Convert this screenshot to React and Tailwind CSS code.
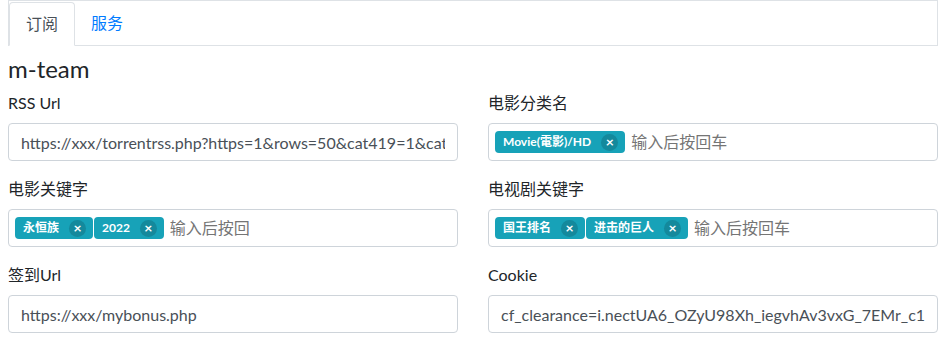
import React from 'react';

const font = "[font-family:'Lato','Noto_Sans_CJK_SC',sans-serif]";

const Tag = ({ text }) => (
  <span className="inline-flex shrink-0 items-center h-[22px] rounded-[4px] bg-[#17a2b8] pl-2 pr-[7px] text-[12px] font-bold text-white leading-none">
    <span>{text}</span>
    <span className="ml-[10px] flex h-[17px] w-[17px] items-center justify-center rounded-full bg-[#14899c] text-[14px] font-bold leading-none">×</span>
  </span>
);

const TextField = ({ label, value }) => (
  <div className="mb-4">
    <div className="mb-2 h-6 leading-6 text-[16px] text-[#212529]">{label}</div>
    <div className="h-[38px] rounded-[4px] border border-[#ced4da] px-3">
      <input
        readOnly
        value={value}
        className="h-full w-full bg-transparent text-[16px] text-[#495057] outline-none"
      />
    </div>
  </div>
);

const TagField = ({ label, tags, placeholder, inputClass = 'flex-1' }) => (
  <div className="mb-4">
    <div className="mb-2 h-6 leading-6 text-[16px] text-[#212529]">{label}</div>
    <div className="flex h-[38px] items-center gap-px overflow-hidden whitespace-nowrap rounded-[4px] border border-[#ced4da] pl-[6px] text-[16px]">
      {tags.map((t) => (
        <Tag key={t} text={t} />
      ))}
      <input
        placeholder={placeholder}
        className={`${inputClass} ml-[5px] min-w-0 bg-transparent text-[16px] outline-none placeholder:text-[#757575]`}
      />
    </div>
  </div>
);

export default function App() {
  return (
    <div className={`${font} bg-white pl-2 w-[949px] h-[348px] overflow-hidden`}>
      <div className="w-[930px]">
        <div className="border border-[#dee2e6]">
          <div className="flex h-[44px] items-end">
            <div className="-mb-px flex h-[44px] items-center rounded-t-[4px] border border-[#dee2e6] border-b-white bg-white px-4 text-[16px] text-[#495057]">
              订阅
            </div>
            <div className="flex h-[44px] items-center px-4 text-[16px] text-[#007bff]">服务</div>
          </div>
        </div>

        <h4 className="mt-2 mb-2 text-[24px] leading-[29px] text-[#212529]">m-team</h4>

        <div className="grid grid-cols-2 gap-x-[30px]">
          <TextField label="RSS Url" value="https://xxx/torrentrss.php?https=1&rows=50&cat419=1&cat439=1" />
          <TagField label="电影分类名" tags={['Movie(電影)/HD']} placeholder="输入后按回车" />
          <TagField label="电影关键字" tags={['永恒族', '2022']} placeholder="输入后按回车" inputClass="w-[80px]" />
          <TagField label="电视剧关键字" tags={['国王排名', '进击的巨人']} placeholder="输入后按回车" />
          <TextField label="签到Url" value="https://xxx/mybonus.php" />
          <TextField label="Cookie" value="cf_clearance=i.nectUA6_OZyU98Xh_iegvhAv3vxG_7EMr_c19g" />
        </div>
      </div>
    </div>
  );
}
